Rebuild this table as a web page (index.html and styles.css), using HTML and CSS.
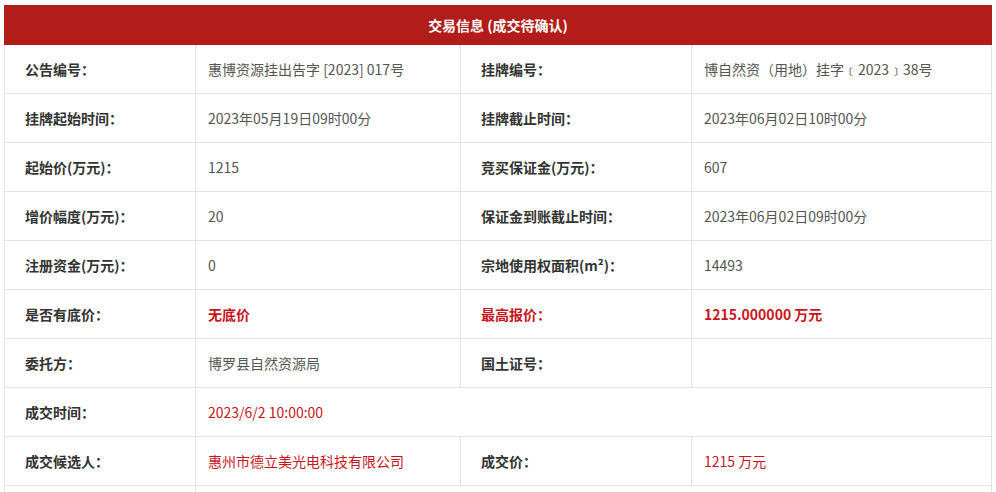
FILE: index.html
```html
<!DOCTYPE html>
<html lang="zh-CN">
<head>
<meta charset="utf-8">
<title>交易信息</title>
<link rel="stylesheet" href="styles.css">
</head>
<body>
<div class="wrap">
  <table class="info">
    <colgroup>
      <col class="c1"><col class="c2"><col class="c3"><col class="c4">
    </colgroup>
    <thead>
      <tr><th colspan="4" class="title">交易信息 (成交待确认)</th></tr>
    </thead>
    <tbody>
      <tr>
        <td class="lbl">公告编号：</td><td class="val">惠博资源挂出告字 [2023] 017号</td>
        <td class="lbl">挂牌编号：</td><td class="val">博自然资（用地）挂字﹝2023﹞38号</td>
      </tr>
      <tr>
        <td class="lbl">挂牌起始时间：</td><td class="val">2023年05月19日09时00分</td>
        <td class="lbl">挂牌截止时间：</td><td class="val">2023年06月02日10时00分</td>
      </tr>
      <tr>
        <td class="lbl">起始价(万元)：</td><td class="val">1215</td>
        <td class="lbl">竞买保证金(万元)：</td><td class="val">607</td>
      </tr>
      <tr>
        <td class="lbl">增价幅度(万元)：</td><td class="val">20</td>
        <td class="lbl">保证金到账截止时间：</td><td class="val">2023年06月02日09时00分</td>
      </tr>
      <tr>
        <td class="lbl">注册资金(万元)：</td><td class="val">0</td>
        <td class="lbl">宗地使用权面积(m²)：</td><td class="val">14493</td>
      </tr>
      <tr>
        <td class="lbl">是否有底价：</td><td class="val red strong">无底价</td>
        <td class="lbl red">最高报价：</td><td class="val red strong">1215.000000 万元</td>
      </tr>
      <tr>
        <td class="lbl">委托方：</td><td class="val">博罗县自然资源局</td>
        <td class="lbl">国土证号：</td><td class="val"></td>
      </tr>
      <tr>
        <td class="lbl">成交时间：</td><td class="val red" colspan="3">2023/6/2 10:00:00</td>
      </tr>
      <tr>
        <td class="lbl">成交候选人：</td><td class="val red">惠州市德立美光电科技有限公司</td>
        <td class="lbl">成交价：</td><td class="val red">1215 万元</td>
      </tr>
      <tr>
        <td class="lbl">&nbsp;</td><td class="val" colspan="3">&nbsp;</td>
      </tr>
    </tbody>
  </table>
</div>
</body>
</html>
```
FILE: styles.css
```css
html, body {
  margin: 0;
  padding: 0;
  background: #fff;
}
body {
  font-family: "Noto Sans CJK SC", "Microsoft YaHei", "Noto Sans", sans-serif;
  font-size: 14px;
  color: #333;
}
.wrap {
  padding: 5px 5px 0 4px;
}
.info {
  width: 987px;
  border-collapse: collapse;
  table-layout: fixed;
}
.c1 { width: 191px; }
.c2 { width: 265px; }
.c3 { width: 231px; }
.c4 { width: 300px; }
.title {
  height: 38px;
  padding: 0;
  background: #b21d1a;
  color: #fff;
  font-weight: bold;
  font-size: 14px;
  text-align: center;
  border: 1px solid #b21d1a;
}
.info td {
  height: 48px;
  border: 1px solid #e3e3e3;
  vertical-align: middle;
  padding: 0;
  line-height: 20px;
}
.lbl {
  padding-left: 20px !important;
  font-weight: bold;
  color: #333;
}
.val {
  padding-left: 12px !important;
  color: #555;
}
.red {
  color: #c8161d !important;
}
.strong {
  font-weight: bold;
}
```
